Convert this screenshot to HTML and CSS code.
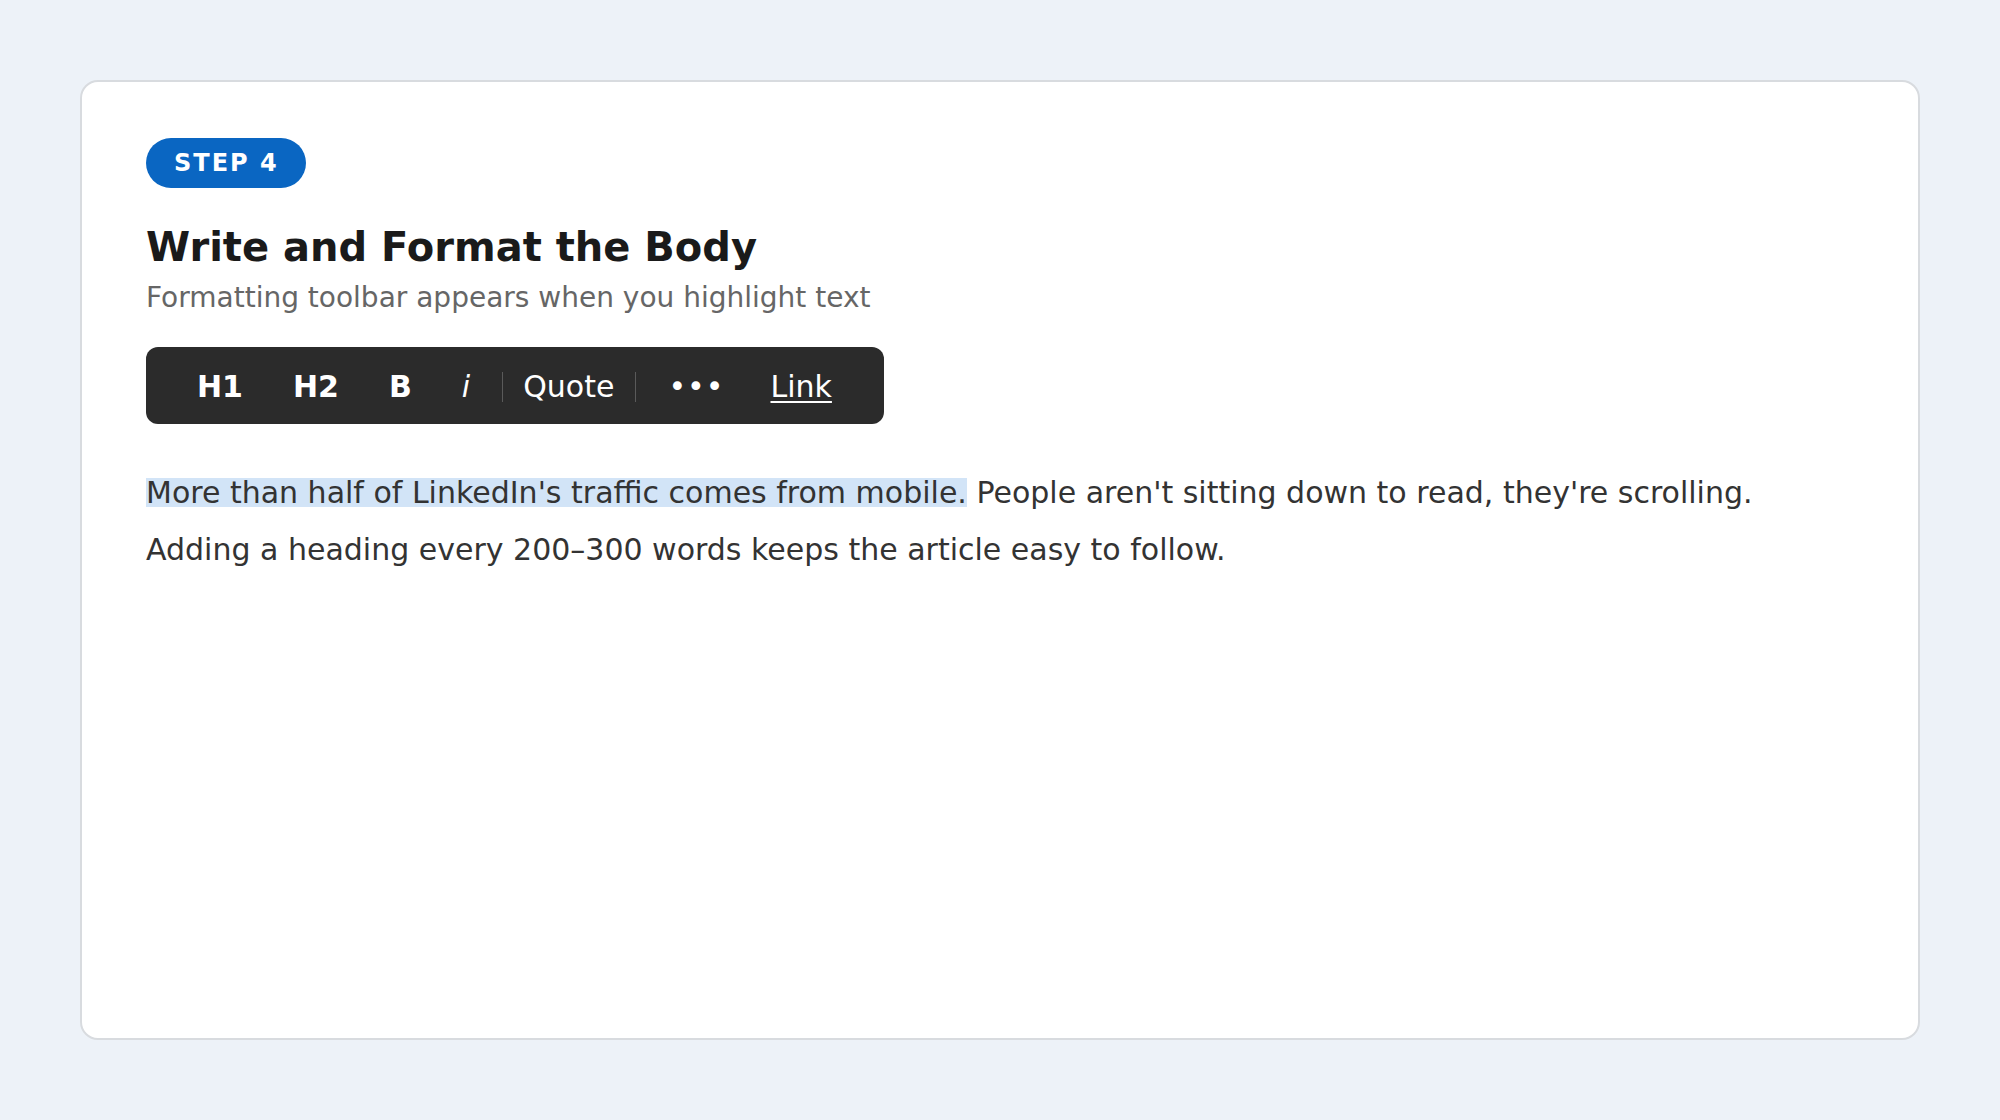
FILE: index.html
```html
<!DOCTYPE html>
<html lang="en">
    <head>
        <title>Step 4 - Write and Format the Body</title>
        <meta charset="utf-8">
        <meta name="viewport" content="width=device-width, initial-scale=1">
        <link rel="stylesheet" href="styles.css">
    </head>
    <body>
        <div class="card">
            <span class="step-badge">STEP 4</span>
            <h1>Write and Format the Body</h1>
            <div class="subtitle">Formatting toolbar appears when you highlight text</div>

            <div class="toolbar">
                <span class="tb-btn tb-bold">H1</span>
                <span class="tb-btn tb-bold">H2</span>
                <span class="tb-btn tb-bold">B</span>
                <span class="tb-btn tb-italic">i</span>
                <span class="tb-btn tb-quote">Quote</span>
                <span class="tb-btn tb-more">&bull;&bull;&bull;</span>
                <span class="tb-btn tb-link">Link</span>
            </div>

            <p class="body-text"><span class="highlight">More than half of LinkedIn's traffic comes from mobile.</span> People aren't sitting down to read, they're scrolling.
                Adding a heading every 200&ndash;300 words keeps the article easy to follow.</p>
        </div>
    </body>
</html>
```

FILE: styles.css
```css
html, body {
  height: 100%;
}

body {
  margin: 0;
  padding: 80px;
  box-sizing: border-box;
  background: #edf2f8;
  font-family: "DejaVu Sans", Verdana, sans-serif;
  color: #333;
}

.card {
  box-sizing: border-box;
  height: 960px;
  background: #fff;
  border: 2px solid #d8dbdf;
  border-radius: 18px;
  padding: 56px 64px;
}

.step-badge {
  display: inline-block;
  background: #0a66c2;
  color: #fff;
  font-weight: bold;
  font-size: 24px;
  letter-spacing: 2px;
  line-height: 30px;
  padding: 10px 27px 10px 28px;
  border-radius: 25px;
}

h1 {
  margin: 35px 0 0 0;
  font-size: 40px;
  line-height: 48px;
  color: #1a1a1a;
}

.subtitle {
  margin-top: 7px;
  font-size: 28px;
  line-height: 39px;
  color: #666;
}

/* floating formatting bar */
.toolbar {
  display: inline-flex;
  align-items: center;
  gap: 14px;
  margin-top: 30px;
  padding: 25px 34px 22px 33px;
  background: #2b2b2b;
  border-radius: 12px;
  color: #fff;
  font-size: 30px;
}

.tb-btn {
  line-height: 30px;
  padding: 0 18px;
}

.tb-bold {
  font-weight: bold;
}

.tb-italic {
  font-style: italic;
}

.tb-quote {
  padding: 0 21px 0 20px;
  border-left: 1px solid #5a5a5a;
  border-right: 1px solid #5a5a5a;
}

.tb-more {
  padding: 0 14px 0 18px;
  letter-spacing: 1px;
}

.tb-link {
  text-decoration: underline;
  text-underline-offset: 4px;
  text-decoration-thickness: 2px;
}

.body-text {
  margin: 40px 0 0 0;
  font-size: 30px;
  line-height: 57px;
  color: #333;
}

/* selection-like band, a bit shorter than the glyph box */
.highlight {
  background: linear-gradient(to bottom, transparent 2.5px, #d2e4f7 2.5px, #d2e4f7 32.5px, transparent 32.5px);
}
```
